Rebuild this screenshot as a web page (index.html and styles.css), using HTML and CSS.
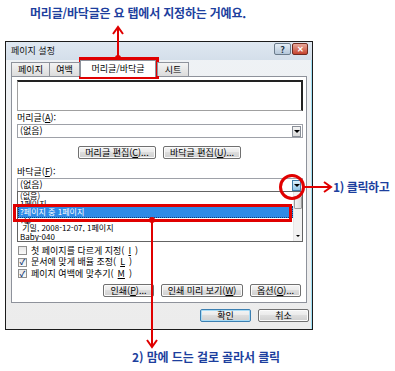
FILE: index.html
```html
<!DOCTYPE html>
<html lang="ko">
<head>
<meta charset="utf-8">
<title>페이지 설정</title>
<link rel="stylesheet" href="styles.css">
</head>
<body>
<div class="page">
  <p class="caption top">머리글/바닥글은 요 탭에서 지정하는 거예요.</p>
  <div class="dialog">
    <div class="titlebar">
      <span class="title">페이지 설정</span>
      <div class="tb-btns"><span class="tb help">?</span><span class="tb close">✕</span></div>
    </div>
    <div class="tabs">
      <div class="tab t1">페이지</div>
      <div class="tab t2">여백</div>
      <div class="tab active t3">머리글/바닥글</div>
      <div class="tab t4">시트</div>
    </div>
    <div class="panel">
      <div class="preview"></div>
      <div class="label">머리글(<u>A</u>):</div>
      <div class="combo"><span class="val">(없음)</span><span class="drop"><i class="tri"></i></span></div>
      <div class="btnrow center">
        <button class="btn w77">머리글 편집(<u>C</u>)...</button>
        <button class="btn w77">바닥글 편집(<u>U</u>)...</button>
      </div>
      <div class="label">바닥글(<u>F</u>):</div>
      <div class="combo"><span class="val">(없음)</span><span class="drop hot"><i class="tri"></i></span></div>
      <div class="footer-area">
        <div class="preview low"></div>
        <div class="dropdown">
          <div class="items">
            <div class="item h8">(없음)</div>
            <div class="item h6">1페이지</div>
            <div class="item sel">?페이지 중 1페이지</div>
            <div class="item h6">?북</div>
            <div class="item h8">&nbsp;기밀, 2008-12-07, 1페이지</div>
            <div class="item h9">Baby-040</div>
          </div>
          <div class="vscroll">
            <span class="thumb"></span>
            <span class="sdown"><i class="tri small"></i></span>
          </div>
        </div>
      </div>
      <div class="checks">
        <label class="chk"><span class="box"></span>첫 페이지를 다르게 지정(<u>I</u>)</label>
        <label class="chk"><span class="box on">✓</span>문서에 맞게 배율 조정(<u>L</u>)</label>
        <label class="chk"><span class="box on">✓</span>페이지 여백에 맞추기(<u>M</u>)</label>
      </div>
      <div class="btnrow right">
        <button class="btn w51">인쇄(<u>P</u>)...</button>
        <button class="btn w81">인쇄 미리 보기(<u>W</u>)</button>
        <button class="btn w51">옵션(<u>O</u>)...</button>
      </div>
    </div>
    <div class="btnrow dlg">
      <button class="btn w51 default">확인</button>
      <button class="btn w51">취소</button>
    </div>
  </div>
  <p class="caption bottom">2) 맘에 드는 걸로 골라서 클릭</p>
  <p class="caption side">1) 클릭하고</p>
  <svg class="overlay" width="395" height="371" viewBox="0 0 395 371">
    <g fill="none" stroke="#e00000" stroke-width="3">
      <rect x="80.5" y="58.5" width="77" height="19"/>
      <rect x="14.5" y="205.5" width="276" height="15"/>
      <circle cx="292" cy="187" r="11.5"/>
    </g>
    <g fill="none" stroke="#e00000" stroke-width="2">
      <line x1="118" y1="28" x2="118" y2="58"/>
      <polyline points="113,34 118,27 123,34"/>
      <line x1="304" y1="187" x2="331" y2="187"/>
      <polyline points="324,182 331,187 324,192"/>
      <line x1="152" y1="219" x2="152" y2="347"/>
      <polyline points="147,340 152,347 157,340"/>
    </g>
    <g fill="#e00000">
      <circle cx="118" cy="58" r="3"/>
      <circle cx="152" cy="220" r="3"/>
    </g>
  </svg>
</div>
</body>
</html>
```

FILE: styles.css
```css
* { box-sizing: border-box; }
html, body { margin: 0; padding: 0; background: #fff; }
body { font-family: "Noto Sans CJK KR", "Noto Sans", sans-serif; font-size: 9px; color: #000; }

.page { position: relative; width: 395px; height: 371px; overflow: hidden; }

.caption { margin: 0; color: #1d3f9e; font-size: 12px; line-height: 14px; white-space: nowrap; }
.caption.top { padding: 6px 0 0 30px; font-weight: bold; letter-spacing: -0.2px; }
.caption.bottom { margin: 20px 0 0 132px; font-weight: bold; letter-spacing: -0.1px; }
.caption.side { position: absolute; left: 333px; top: 180px; font-weight: bold; letter-spacing: -0.4px; }

.overlay { position: absolute; left: 0; top: 0; pointer-events: none; }

.dialog {
  margin: 21px 0 0 5px;
  width: 308px; height: 289px;
  border: 1px solid #1c1c1c;
  box-shadow: inset -1px 0 0 #9fe0f5;
  background: linear-gradient(#eef2f6, #f0f0f0 40%, #ececec);
  display: flex; flex-direction: column;
}

.titlebar { height: 18px; display: flex; align-items: center; justify-content: space-between; padding: 0 4px 0 5px; background: linear-gradient(#dfe8f1, #d4dfea); }
.title { font-size: 9px; color: #111; line-height: 10px; }
.tb-btns { display: flex; gap: 1px; align-self: flex-start; margin-top: 1px; }
.tb { display: flex; align-items: center; justify-content: center; height: 12px; border: 1px solid #6b7c8c; border-radius: 2px; font-size: 9px; font-weight: bold; line-height: 1; }
.tb.help { width: 17px; background: linear-gradient(#e4edf5, #b6c8da); color: #234; }
.tb.close { width: 16px; background: linear-gradient(#e9a89a, #c5432e); color: #fff; border-color: #6e2a20; font-size: 8px; }

.tabs { height: 16px; display: flex; align-items: flex-end; padding-left: 5px; position: relative; z-index: 1; }
.tab { height: 14px; border: 1px solid #8e929b; border-bottom: none; background: linear-gradient(#f3f3f3, #dcdcdc); font-size: 9px; line-height: 13px; text-align: center; margin-right: -1px; }
.t1 { width: 39px; }
.t2 { width: 31px; }
.t3 { width: 76px; }
.t4 { width: 32px; }
.tab.active { height: 17px; background: #fff; margin: 0 1px -1px 1px; line-height: 15px; border-color: #8e929b; }

.panel { margin: 0 5px 0 5px; height: 227px; border: 1px solid #8e929b; background: #fff; padding: 3px 3px 0 5px; display: flex; flex-direction: column; }

.preview { height: 31px; border: 1px solid #a0a0a0; border-top: 2px solid #222; border-right: 2px solid #222; background: #fff; flex: none; }
.preview.low { height: 50px; }

.label { height: 13px; line-height: 12px; padding-top: 1px; flex: none; }
.label u, .btn u, .chk u { text-decoration: underline; }

.combo { height: 14px; border: 1px solid #9ea1a8; background: #fff; display: flex; align-items: center; justify-content: space-between; padding: 0 1px 0 2px; flex: none; position: relative; }
.val { line-height: 12px; }
.drop { width: 9px; height: 11px; border: 1px solid #8a8f98; background: linear-gradient(#f4f4f4, #d9d9d9); display: flex; align-items: center; justify-content: center; }
.drop.hot { background: linear-gradient(#dff1fb, #8fc3e6); border-color: #3f7ca8; }
.tri { width: 0; height: 0; border-left: 3px solid transparent; border-right: 3px solid transparent; border-top: 3px solid #000; display: block; }
.tri.small { border-left-width: 2px; border-right-width: 2px; border-top-width: 2px; }

.btnrow { display: flex; gap: 7px; flex: none; }
.btnrow.center { justify-content: center; margin: 8px 0 6px; padding-right: 1px; }
.btnrow.right { justify-content: flex-end; margin-top: 4px; padding-right: 2px; }
.btnrow.dlg { justify-content: flex-end; margin-top: 6px; padding-right: 3px; }

.btn { height: 13px; padding: 0; font-family: inherit; font-size: 9px; line-height: 11px; color: #000; border: 1px solid #707070; border-radius: 2px; background: linear-gradient(#f4f4f4 0%, #ebebeb 45%, #dddddd 50%, #cfcfcf 100%); box-shadow: inset 0 0 0 1px #fbfbfb; }
.btn.w77 { width: 78px; }
.btn.w81 { width: 82px; }
.btn.w51 { width: 51px; }
.btn.default { border-color: #3c7fb1; box-shadow: inset 0 0 0 1px #a9dcf6; }

.footer-area { position: relative; height: 52px; flex: none; }
.dropdown { position: absolute; left: 0; top: -1px; right: 0; height: 51px; border: 1px solid #646464; background: #fff; display: flex; }
.items { flex: 1; overflow: hidden; }
.item { padding-left: 2px; font-size: 8px; line-height: 8px; white-space: nowrap; overflow: hidden; }
.item.h8 { height: 8px; }
.item.h6 { height: 6px; line-height: 7px; }
.item.h9 { height: 9px; line-height: 9px; }
.item.sel { height: 12px; line-height: 12px; background: #2f8ae6; color: #fff; outline: 1px dotted #0a3d7a; outline-offset: -1px; }
.vscroll { width: 9px; border-left: 1px solid #e6e6e6; background: #f2f2f2; display: flex; flex-direction: column; justify-content: space-between; align-items: center; padding: 4px 0 3px; }
.thumb { width: 8px; height: 13px; border: 1px solid #9c9c9c; border-radius: 1px; background: linear-gradient(90deg, #f2f2f2, #dadada); }
.sdown { height: 5px; display: flex; align-items: center; }

.checks { display: flex; flex-direction: column; padding-left: 1px; margin-top: 1px; flex: none; }
.chk { height: 11.5px; display: flex; align-items: center; gap: 4px; line-height: 10px; }
.box { width: 9px; height: 9px; border: 1px solid #8f8f8f; background: linear-gradient(#e8e8e8, #fafafa); display: flex; align-items: center; justify-content: center; font-size: 8px; line-height: 1; color: #1b3f7a; font-weight: bold; }
```
